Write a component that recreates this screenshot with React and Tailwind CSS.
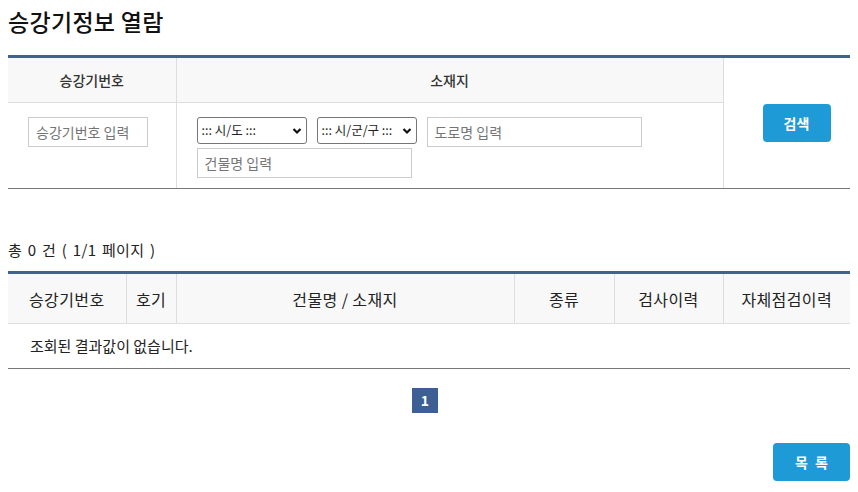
import React from "react";

const font = { fontFamily: '"Malgun Gothic", "Noto Sans CJK KR", "Noto Sans", sans-serif' };

function Chevron() {
  return (
    <svg width="10" height="8" viewBox="0 0 10 8" className="shrink-0">
      <path d="M1.5 2 L5 5.5 L8.5 2" fill="none" stroke="#111" strokeWidth="2.2" />
    </svg>
  );
}

function Select({ label, w }) {
  return (
    <div className={`flex h-[27px] shrink-0 items-center justify-between gap-[1px] overflow-hidden rounded-[3px] border border-[#767676] bg-white pl-[4px] pr-[4px] text-[12.5px] text-[#222] ${w}`}>
      <span className="overflow-hidden whitespace-nowrap">{label}</span>
      <Chevron />
    </div>
  );
}

function Input({ ph, w }) {
  return (
    <div className={`flex h-[30px] shrink-0 items-center border border-[#cccccc] bg-white px-[7px] text-[14px] text-[#757575] ${w}`}>
      {ph}
    </div>
  );
}

export default function App() {
  return (
    <div className="w-[858px] bg-white px-2 text-[#222]" style={font}>
      <h1 className="pt-[5px] text-[23px] font-medium leading-[32px] tracking-[0.3px] text-[#111]">승강기정보 열람</h1>

      <table className="mt-[18px] w-[842px] table-fixed border-collapse border-t-[3px] border-t-[#41628f]">
        <colgroup>
          <col className="w-[168px]" />
          <col className="w-[547px]" />
          <col className="w-[127px]" />
        </colgroup>
        <tbody>
          <tr className="h-[46px]">
            <th className="border-b border-r border-[#dddddd] bg-[#f8f8f8] text-[14px] font-medium text-[#333]">승강기번호</th>
            <th className="border-b border-r border-[#dddddd] bg-[#f8f8f8] text-[14px] font-medium text-[#333]">소재지</th>
            <td rowSpan={2} className="border-b border-b-[#777777] bg-white pl-[39px] align-middle">
              <button className="h-[38px] w-[68px] rounded-[4px] bg-[#1e9ad6] text-[14px] font-bold text-white">검색</button>
            </td>
          </tr>
          <tr className="h-[86px]">
            <td className="border-b border-r border-r-[#dddddd] border-b-[#777777] pl-[20px] align-top pt-[14px]">
              <Input ph="승강기번호 입력" w="w-[120px]" />
            </td>
            <td className="border-b border-r border-r-[#dddddd] border-b-[#777777] pl-[20px] align-top pt-[14px]">
              <div className="flex flex-col gap-[1px]">
                <div className="flex items-start gap-[10px]">
                  <Select label="::: 시/도 :::" w="w-[110px]" />
                  <Select label="::: 시/군/구 :::" w="w-[100px]" />
                  <Input ph="도로명 입력" w="w-[215px]" />
                </div>
                <Input ph="건물명 입력" w="w-[215px]" />
              </div>
            </td>
          </tr>
        </tbody>
      </table>

      <p className="mt-[51px] text-[15px] leading-[20px] tracking-[0.3px] text-[#222] [word-spacing:2px]">총 0 건 ( 1/1 페이지 )</p>

      <table className="mt-[11px] w-[842px] table-fixed border-collapse border-t-[3px] border-t-[#41628f]">
        <colgroup>
          <col className="w-[118px]" />
          <col className="w-[50px]" />
          <col className="w-[338px]" />
          <col className="w-[100px]" />
          <col className="w-[109px]" />
          <col className="w-[127px]" />
        </colgroup>
        <thead>
          <tr className="h-[51px] bg-[#f8f8f8] text-[16px] tracking-[0.4px] text-[#222]">
            <th className="border-b border-r border-[#dddddd] font-normal">승강기번호</th>
            <th className="border-b border-r border-[#dddddd] font-normal">호기</th>
            <th className="border-b border-r border-[#dddddd] font-normal">건물명 / 소재지</th>
            <th className="border-b border-r border-[#dddddd] font-normal">종류</th>
            <th className="border-b border-r border-[#dddddd] font-normal">검사이력</th>
            <th className="border-b border-[#dddddd] font-normal">자체점검이력</th>
          </tr>
        </thead>
        <tbody>
          <tr className="h-[45px]">
            <td colSpan={6} className="border-b border-b-[#777777] pl-[22px] text-[15px] text-[#222]">조회된 결과값이 없습니다.</td>
          </tr>
        </tbody>
      </table>

      <div className="mt-[19px] flex justify-center pr-[8px]">
        <span className="flex h-[25px] w-[26px] items-center justify-center bg-[#3d5f93] text-[14px] font-bold text-white">1</span>
      </div>

      <div className="mt-[30px] flex justify-end pb-[11px]">
        <button className="h-[38px] w-[77px] rounded-[4px] bg-[#1e9ad6] text-[14px] font-bold text-white [word-spacing:4px]">목 록</button>
      </div>
    </div>
  );
}
